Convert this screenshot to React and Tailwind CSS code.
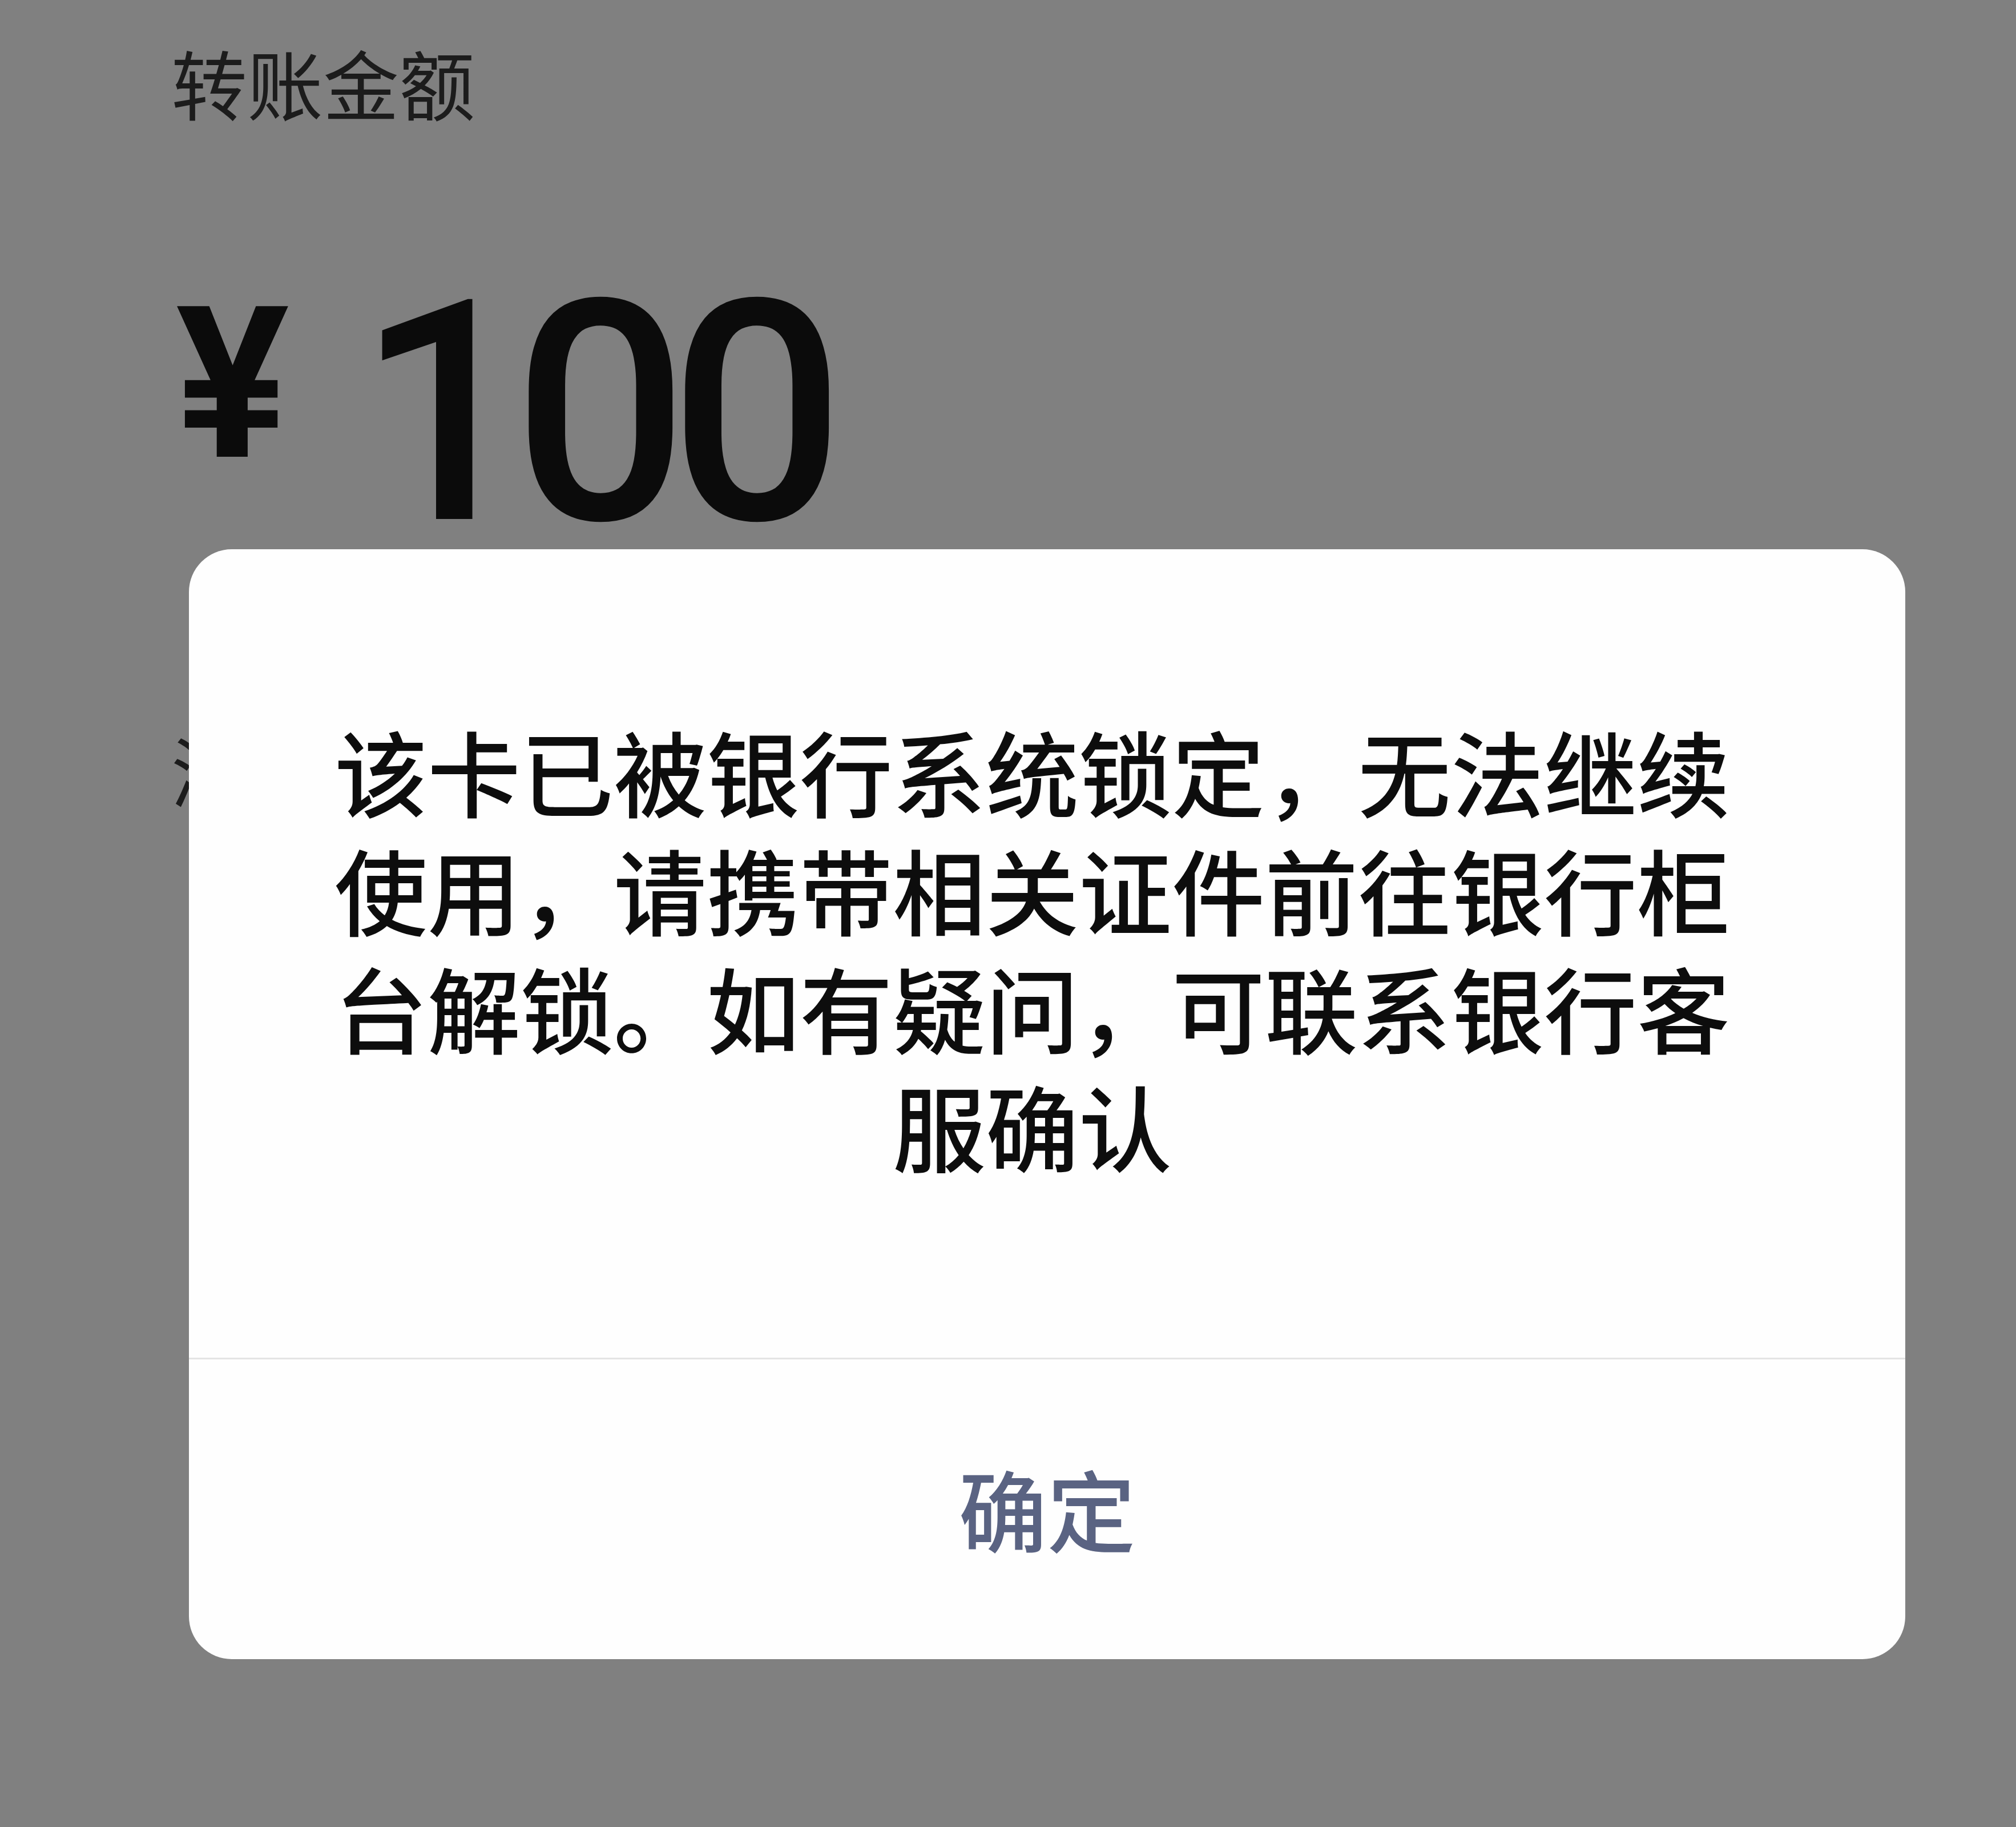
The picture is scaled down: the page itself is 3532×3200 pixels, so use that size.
export default function App() {
  const cjk = { fontFamily: '"Noto Sans CJK SC", "Noto Sans", sans-serif' };
  return (
    <div className="relative w-[3532px] h-[3200px] overflow-hidden bg-[#808080]">
      <div className="flex flex-col pl-[300px] pt-[77px]">
        <div className="text-[133px] leading-none text-[#1c1c1c] font-normal" style={cjk}>
          转账金额
        </div>
        <div className="mt-[245px] flex items-start text-[#0b0b0b]" style={{ fontFamily: 'Roboto, "Liberation Sans", sans-serif' }}>
          <span className="ml-[8px] mt-[33px] text-[371px] leading-none font-bold">¥</span>
          <span className="ml-[118px] text-[540px] leading-none font-medium tracking-[-33px]">100</span>
        </div>
        <div className="mt-[285px] text-[133px] leading-none text-[#1c1c1c]" style={cjk}>
          添加转账说明
        </div>
      </div>

      <div className="absolute left-[331px] top-[962px] w-[3007px] h-[1944px] rounded-[75px] bg-[#fefefe] flex flex-col overflow-hidden">
        <div className="h-[1416px] flex items-center justify-center pr-[52px] pb-[22px]">
          <div className="text-center text-[163px] leading-[207px] font-medium text-[#0d0d0d]" style={cjk}>
            <div>该卡已被银行系统锁定，无法继续</div>
            <div>使用，请携带相关证件前往银行柜</div>
            <div>台解锁。如有疑问，可联系银行客</div>
            <div>服确认</div>
          </div>
        </div>
        <div className="h-[3px] bg-[#e4e4e4]" />
        <div className="flex-1 flex items-center justify-center pb-[8px]">
          <span className="text-[155px] leading-none font-medium text-[#5a6382]" style={cjk}>
            确定
          </span>
        </div>
      </div>
    </div>
  );
}
